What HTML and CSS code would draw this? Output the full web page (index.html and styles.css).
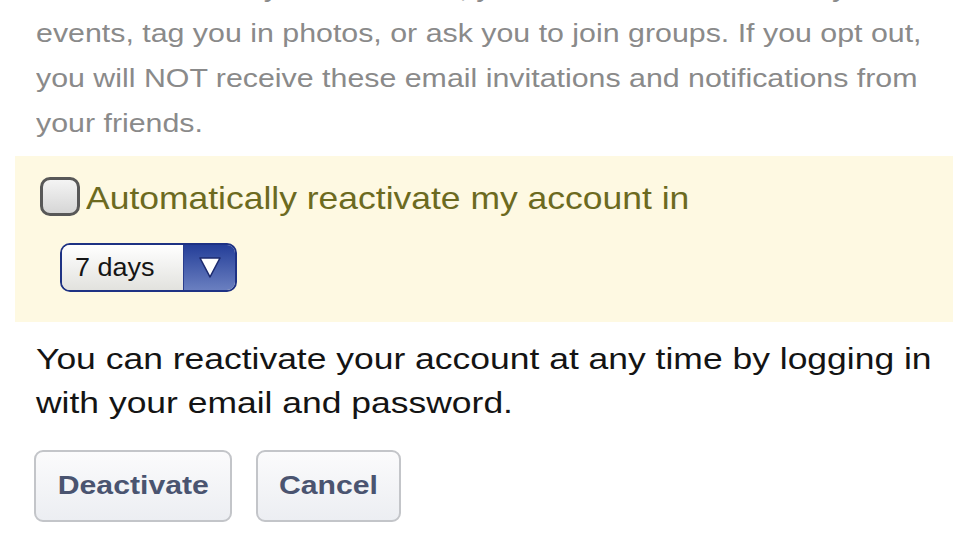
FILE: index.html
```html
<!DOCTYPE html>
<html>
<head>
<meta charset="utf-8">
<link rel="stylesheet" href="styles.css">
</head>
<body>
<div class="page">
  <p class="note"><span class="wide wide-note">Note: Even after you deactivate, your friends can still invite you to<br>events, tag you in photos, or ask you to join groups. If you opt out,<br>you will NOT receive these email invitations and notifications from<br>your friends.</span></p>
  <div class="reactivate">
    <label class="check-row">
      <span class="checkbox"></span>
      <span class="check-label wide wide-label">Automatically reactivate my account in</span>
    </label>
    <div class="select">
      <span class="select-value"><span class="wide wide-select">7 days</span></span>
      <span class="select-arrow">
        <svg width="24" height="23" viewBox="0 0 24 23"><path d="M2 2 L22 2 L12 21 Z" fill="#fff" stroke="#1c2a6e" stroke-width="1.6" stroke-linejoin="round"/></svg>
      </span>
    </div>
  </div>
  <p class="info"><span class="wide wide-info">You can reactivate your account at any time by logging in<br>with your email and password.</span></p>
  <div class="actions">
    <button class="btn btn-deactivate"><span class="wide wide-btn">Deactivate</span></button>
    <button class="btn btn-cancel"><span class="wide wide-btn">Cancel</span></button>
  </div>
</div>
</body>
</html>
```

FILE: styles.css
```css
html, body {
  margin: 0;
  padding: 0;
  background: #ffffff;
  overflow: hidden;
}

.page {
  font-family: "Liberation Sans", Arial, sans-serif;
  width: 969px;
}

/* The reference is horizontally stretched; widen glyphs accordingly */
.wide {
  display: inline-block;
  white-space: nowrap;
  transform-origin: left center;
}

.wide-note { transform: scaleX(1.145); }
.wide-label { transform: scaleX(1.163); }
.wide-select { transform: scaleX(1.08); }
.wide-info { transform: scaleX(1.202); }
.wide-btn { transform: scaleX(1.14); transform-origin: center center; }

.note {
  margin: -34.5px 0 0 0;
  padding: 0 36px;
  font-size: 26.5px;
  line-height: 45px;
  color: #8a8a8a;
}

.reactivate {
  margin: 10px 16px 0 15px;
  background: #fef9e2;
  padding: 21px 25px 30px 25px;
  height: 166px;
  box-sizing: border-box;
}

.check-row {
  display: flex;
  align-items: center;
  gap: 6px;
  height: 39px;
}

.checkbox {
  width: 34px;
  height: 33px;
  border: 3px solid #585858;
  border-radius: 10px;
  background: linear-gradient(#f4f4f4, #d6d6d6);
  flex: none;
}

.check-label {
  font-size: 30.5px;
  color: #6c6a1f;
  padding-top: 5px;
}

.select {
  margin: 27px 0 0 20px;
  display: flex;
  width: 177px;
  height: 49px;
  box-sizing: border-box;
  border: 2px solid #1e3284;
  border-radius: 10px;
  overflow: hidden;
}

.select-value {
  flex: 1;
  display: flex;
  align-items: center;
  padding-left: 13px;
  font-size: 25px;
  color: #151515;
  background: linear-gradient(#ffffff, #e2e2de);
}

.select-arrow {
  width: 51px;
  display: flex;
  align-items: center;
  justify-content: center;
  background: linear-gradient(#253f99, #6a7fc0);
  border-left: 1px solid #2a3d8c;
}

.info {
  margin: 15px 0 0 0;
  padding: 0 36px;
  font-size: 29.5px;
  line-height: 44px;
  color: #141414;
}

.actions {
  display: flex;
  gap: 24px;
  margin: 25px 0 0 34px;
}

.btn {
  height: 72px;
  border: 2px solid #c3c5c9;
  border-radius: 9px;
  background: linear-gradient(#fbfbfc, #eceef2);
  font-family: "Liberation Sans", Arial, sans-serif;
  font-weight: bold;
  font-size: 26.5px;
  color: #4a5470;
  padding: 0;
}

.btn-deactivate {
  width: 198px;
}

.btn-cancel {
  width: 145px;
}
```
